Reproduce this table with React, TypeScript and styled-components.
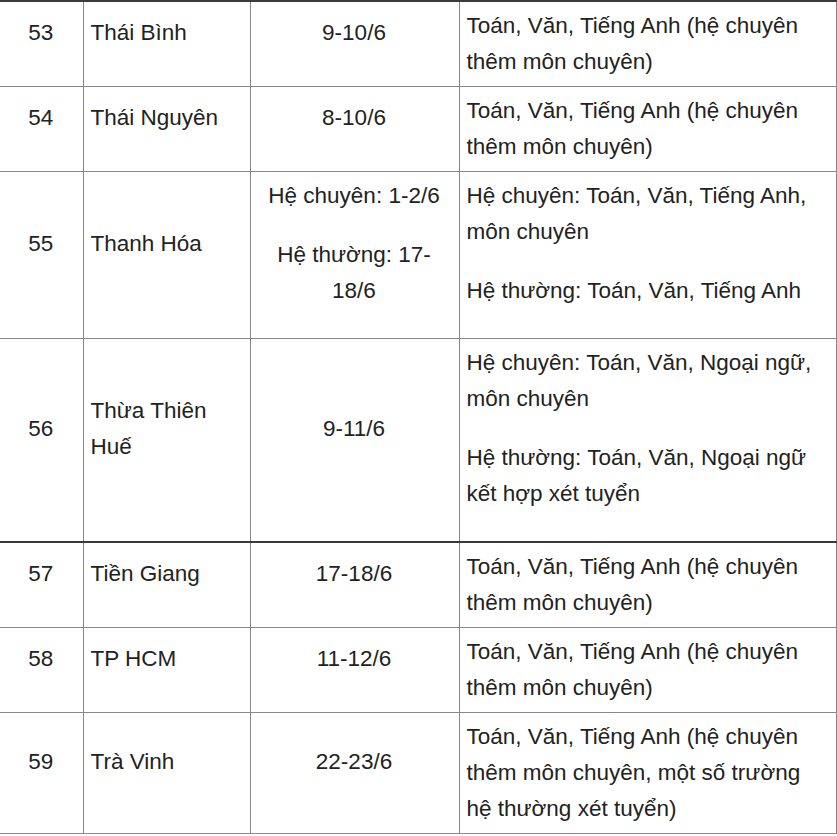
import { createGlobalStyle } from "styled-components";
import styled from "styled-components";

const GlobalStyle = createGlobalStyle`
  html, body {
    margin: 0;
    padding: 0;
    background: #fff;
  }
  body {
    font-family: "Liberation Sans", Arial, sans-serif;
    color: #222;
  }
`;

const Table = styled.table`
  width: 836px;
  border-collapse: collapse;
  table-layout: fixed;
  font-size: 22.5px;
  line-height: 36px;
`;

const Row = styled.tr<{ $thick?: boolean }>`
  & > td {
    border-top: ${(p) => (p.$thick ? "2px solid #3a3a3a" : "1px solid #888")};
  }
`;

const Cell = styled.td<{ $align?: "left" | "center" }>`
  border: 1px solid #888;
  padding: 6px 8px 6px 7px;
  vertical-align: middle;
  text-align: ${(p) => p.$align || "left"};

  &:first-child {
    border-left: none;
  }
`;

const Para = styled.p`
  margin: 0 0 23px;
`;

type Item = {
  no: number;
  name: string;
  date: string[][];
  subjects: string[] | string;
  thick?: boolean;
};

const rows: Item[] = [
  {
    no: 53,
    name: "Thái Bình",
    date: [["9-10/6"]],
    subjects: "Toán, Văn, Tiếng Anh (hệ chuyên thêm môn chuyên)",
    thick: true,
  },
  {
    no: 54,
    name: "Thái Nguyên",
    date: [["8-10/6"]],
    subjects: "Toán, Văn, Tiếng Anh (hệ chuyên thêm môn chuyên)",
  },
  {
    no: 55,
    name: "Thanh Hóa",
    date: [["Hệ chuyên: 1-2/6"], ["Hệ thường: 17-", "18/6"]],
    subjects: [
      "Hệ chuyên: Toán, Văn, Tiếng Anh, môn chuyên",
      "Hệ thường: Toán, Văn, Tiếng Anh",
    ],
  },
  {
    no: 56,
    name: "Thừa Thiên Huế",
    date: [["9-11/6"]],
    subjects: [
      "Hệ chuyên: Toán, Văn, Ngoại ngữ, môn chuyên",
      "Hệ thường: Toán, Văn, Ngoại ngữ kết hợp xét tuyển",
    ],
  },
  {
    no: 57,
    name: "Tiền Giang",
    date: [["17-18/6"]],
    subjects: "Toán, Văn, Tiếng Anh (hệ chuyên thêm môn chuyên)",
    thick: true,
  },
  {
    no: 58,
    name: "TP HCM",
    date: [["11-12/6"]],
    subjects: "Toán, Văn, Tiếng Anh (hệ chuyên thêm môn chuyên)",
  },
  {
    no: 59,
    name: "Trà Vinh",
    date: [["22-23/6"]],
    subjects:
      "Toán, Văn, Tiếng Anh (hệ chuyên thêm môn chuyên, một số trường hệ thường xét tuyển)",
  },
];

const App = () => {
  return (
    <>
      <GlobalStyle />
      <Table>
        <colgroup>
          <col style={{ width: 83 }} />
          <col style={{ width: 167 }} />
          <col style={{ width: 209 }} />
          <col style={{ width: 377 }} />
        </colgroup>
        <tbody>
          {rows.map((r) => (
            <Row key={r.no} $thick={r.thick}>
              <Cell $align="center">
                <Para>{r.no}</Para>
              </Cell>
              <Cell>
                <Para>{r.name}</Para>
              </Cell>
              <Cell $align="center">
                {r.date.map((lines, i) => (
                  <Para key={i}>
                    {lines.map((l, j) => (
                      <span key={j}>
                        {j > 0 && <br />}
                        {l}
                      </span>
                    ))}
                  </Para>
                ))}
              </Cell>
              <Cell>
                {Array.isArray(r.subjects)
                  ? r.subjects.map((s, i) => <Para key={i}>{s}</Para>)
                  : r.subjects}
              </Cell>
            </Row>
          ))}
        </tbody>
      </Table>
    </>
  );
};

export default App;
